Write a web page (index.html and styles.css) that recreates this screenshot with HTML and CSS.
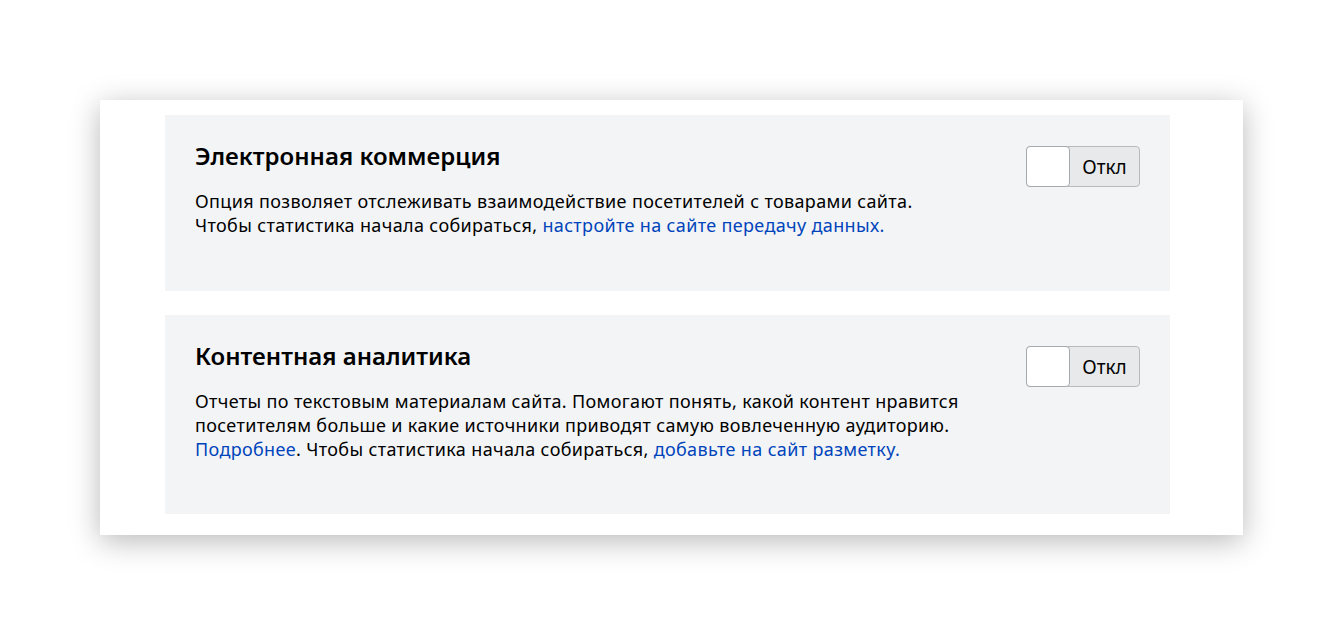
FILE: index.html
```html
<!DOCTYPE html>
<html lang="ru">
<head>
    <meta charset="UTF-8">
    <meta name="viewport" content="width=device-width, initial-scale=1.0">
    <title>Настройки счетчика</title>
    <link rel="stylesheet" href="styles.css">
</head>
<body>

<div class="panel">

    <!-- Электронная коммерция -->
    <div class="option">
        <div class="option-text">
            <h2>Электронная коммерция</h2>
            <p>Опция позволяет отслеживать взаимодействие посетителей с товарами сайта.<br>
            Чтобы статистика начала собираться, <a href="#">настройте на сайте передачу данных.</a></p>
        </div>
        <label class="toggle">
            <span class="knob"></span>
            <span class="state">Откл</span>
        </label>
    </div>

    <!-- Контентная аналитика -->
    <div class="option option-tall">
        <div class="option-text">
            <h2>Контентная аналитика</h2>
            <p>Отчеты по текстовым материалам сайта. Помогают понять, какой контент нравится<br>
            посетителям больше и какие источники приводят самую вовлеченную аудиторию.<br>
            <a href="#">Подробнее</a>. Чтобы статистика начала собираться, <a href="#">добавьте на сайт разметку.</a></p>
        </div>
        <label class="toggle">
            <span class="knob"></span>
            <span class="state">Откл</span>
        </label>
    </div>

</div>

</body>
</html>
```

FILE: styles.css
```css
body {
    margin: 0;
    padding: 100px;
    font-family: "Noto Sans", Arial, sans-serif;
    background-color: #fff;
    color: #000;
}
.panel {
    background-color: #fff;
    box-shadow: 0 6px 28px rgba(0, 0, 0, 0.28);
    padding: 15px 73px 21px 65px;
    display: flex;
    flex-direction: column;
    gap: 24px;
}
.option {
    background-color: #f3f4f6;
    height: 176px;
    box-sizing: border-box;
    padding: 26px 30px 0 30px;
    display: flex;
    justify-content: space-between;
    align-items: flex-start;
}
.option-tall {
    height: 199px;
}
.option h2 {
    margin: 0 0 18px 0;
    font-size: 24px;
    font-weight: 600;
    line-height: 30px;
}
.option p {
    margin: 0;
    font-size: 18px;
    letter-spacing: 0.35px;
    line-height: 24px;
}
.option a {
    color: #0044bb;
    text-decoration: none;
}
.toggle {
    display: flex;
    flex-shrink: 0;
    margin-top: 5px;
    width: 114px;
    height: 41px;
    box-sizing: border-box;
    border: 1px solid #b8b9ba;
    border-radius: 4px;
    background-color: #e8e9ea;
    cursor: pointer;
}
.knob {
    width: 42px;
    margin: -1px 0 -1px -1px;
    background-color: #fff;
    border: 1px solid #a8a9aa;
    border-radius: 4px;
}
.state {
    flex: 1;
    display: flex;
    align-items: center;
    justify-content: center;
    font-size: 19px;
}
```
